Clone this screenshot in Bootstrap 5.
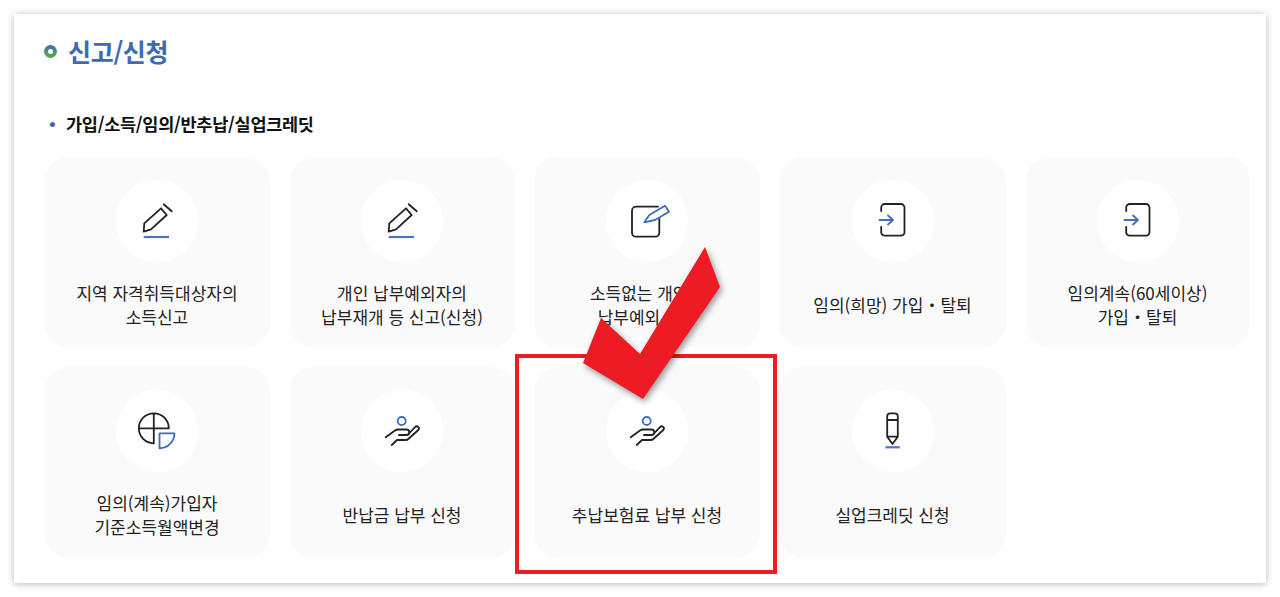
<!DOCTYPE html>
<html lang="ko">
  <head>
    <meta charset="UTF-8" />
    <meta name="viewport" content="width=device-width, initial-scale=1.0" />
    <title>신고/신청</title>
    <link href="https://cdn.jsdelivr.net/npm/bootstrap@5.3.0/dist/css/bootstrap.min.css" rel="stylesheet" />
    <style>
      html, body { height: 597px; overflow: hidden; background: #fff; }
      body { font-family: "Noto Sans CJK KR", "Noto Sans", sans-serif; color: #222; }
      .panel-box { margin: 14px; width: 1252px; height: 569px; padding: 0 16px 0 30px; box-shadow: 0 1px 7px rgba(0,0,0,.28); }
      .page-title { height: 76px; padding-bottom: 2px; gap: 11px; font-size: 25px; line-height: 36px; color: #3e69b3; font-weight: 700; letter-spacing: -.3px; margin: 0; }
      .title-ring { width: 13px; height: 13px; border-radius: 50%; background: linear-gradient(#3e69b3, #4fa653 70%); position: relative; flex: none; }
      .title-ring::after { content: ""; position: absolute; inset: 4px; border-radius: 50%; background: #fff; }
      .sub-title { height: 67px; padding: 1px 0 0 6px; gap: 11px; font-size: 17.5px; line-height: 24px; font-weight: 700; color: #111; letter-spacing: -.28px; margin: 0; }
      .sub-dot { width: 5px; height: 5px; border-radius: 50%; background: #4a5fb0; flex: none; }
      .tile-grid { grid-template-columns: 226px 226px 226px 227px 225px; grid-auto-rows: 191px; gap: 19px; }
      .tile { background: #fafafa; border-radius: 24px; padding-top: 23px; }
      .tile-circle { width: 82px; height: 82px; border-radius: 50%; background: #fff; flex: none; }
      .tile-circle svg { display: block; fill: none; stroke: #222; stroke-width: 1.8; stroke-linecap: round; stroke-linejoin: round; }
      .blue { stroke: #3f6cbf; }
      .blue-line { stroke: #4a75c9; stroke-width: 2.2; stroke-linecap: butt; }
      .tile-label { font-size: 17px; line-height: 23.5px; color: #222; padding-bottom: 1px; }
      .red-frame { position: absolute; left: 515px; top: 354px; width: 262px; height: 220px; border: 4px solid #ed1c24; }
      .red-check { position: absolute; left: 570px; top: 235px; filter: drop-shadow(2px 3px 3px rgba(0,0,0,.4)); }
    </style>
  </head>
  <body>
    <svg width="0" height="0" class="position-absolute">
      <defs>
        <g id="icon-pencil">
          <path d="M27.7 51.7 28.3 43.3 45 28.3 50.7 35 35 49.3Z" />
          <path d="M47.7 24.3 55.7 31.3" />
          <path class="blue-line" d="M27.7 57H53" />
        </g>
        <g id="icon-login">
          <path d="M29.2 31V27.5A3.5 3.5 0 0 1 32.7 24H49A3.5 3.5 0 0 1 52.5 27.5V52.2A3.5 3.5 0 0 1 49 55.7H32.7A3.5 3.5 0 0 1 29.2 52.2V47" />
          <path class="blue" d="M27.5 40H41M36 35.5 41 40 36 44.5" />
        </g>
        <g id="icon-hand">
          <circle class="blue" cx="40.7" cy="31" r="4" />
          <path d="M24.7 47.3 34 40.5C35 39.8 36 39.5 37 39.5H45.5A2.7 2.7 0 0 1 45.5 45H38" />
          <path d="M47.5 44 54 37.2C56 35 59.3 37.5 57.3 40L47.3 49C46.5 49.7 45.7 50 45 50H36L30.7 55" />
        </g>
      </defs>
    </svg>

    <div class="panel-box position-relative bg-white">
      <h2 class="page-title d-flex align-items-center">
        <span class="title-ring"></span>
        <span>신고/신청</span>
      </h2>
      <h3 class="sub-title d-flex align-items-center">
        <span class="sub-dot"></span>
        <span>가입/소득/임의/반추납/실업크레딧</span>
      </h3>

      <div class="tile-grid d-grid">
        <div class="tile d-flex flex-column align-items-center">
          <div class="tile-circle"><svg width="82" height="82" viewBox="0 0 82 82"><use href="#icon-pencil" /></svg></div>
          <div class="tile-label flex-grow-1 d-flex align-items-center text-center">지역 자격취득대상자의<br />소득신고</div>
        </div>
        <div class="tile d-flex flex-column align-items-center">
          <div class="tile-circle"><svg width="82" height="82" viewBox="0 0 82 82"><use href="#icon-pencil" /></svg></div>
          <div class="tile-label flex-grow-1 d-flex align-items-center text-center">개인 납부예외자의<br />납부재개 등 신고(신청)</div>
        </div>
        <div class="tile d-flex flex-column align-items-center">
          <div class="tile-circle">
            <svg width="82" height="82" viewBox="0 0 82 82">
              <path d="M52 26.7H30A4 4 0 0 0 26 30.7V52.7A4 4 0 0 0 30 56.7H49.3A4 4 0 0 0 53.3 52.7V38" />
              <path class="blue" d="M38.3 42.3 43.3 35 59 25.7 63 31.7 49 40Z" />
            </svg>
          </div>
          <div class="tile-label flex-grow-1 d-flex align-items-center text-center">소득없는 개인의<br />납부예외 신청</div>
        </div>
        <div class="tile d-flex flex-column align-items-center">
          <div class="tile-circle"><svg width="82" height="82" viewBox="0 0 82 82"><use href="#icon-login" /></svg></div>
          <div class="tile-label flex-grow-1 d-flex align-items-center text-center">임의(희망) 가입・탈퇴</div>
        </div>
        <div class="tile d-flex flex-column align-items-center">
          <div class="tile-circle"><svg width="82" height="82" viewBox="0 0 82 82"><use href="#icon-login" /></svg></div>
          <div class="tile-label flex-grow-1 d-flex align-items-center text-center">임의계속(60세이상)<br />가입・탈퇴</div>
        </div>
        <div class="tile d-flex flex-column align-items-center">
          <div class="tile-circle">
            <svg width="82" height="82" viewBox="0 0 82 82">
              <path d="M52.8 38.3A15 15 0 1 0 37.8 53.3M22.8 38.3H52.8M37.8 23.3V53.3" />
              <path class="blue" d="M43.5 43.3H58.5A15 15 0 0 1 43.5 58.3Z" />
            </svg>
          </div>
          <div class="tile-label flex-grow-1 d-flex align-items-center text-center">임의(계속)가입자<br />기준소득월액변경</div>
        </div>
        <div class="tile d-flex flex-column align-items-center">
          <div class="tile-circle"><svg width="82" height="82" viewBox="0 0 82 82"><use href="#icon-hand" /></svg></div>
          <div class="tile-label flex-grow-1 d-flex align-items-center text-center">반납금 납부 신청</div>
        </div>
        <div class="tile d-flex flex-column align-items-center">
          <div class="tile-circle"><svg width="82" height="82" viewBox="0 0 82 82"><use href="#icon-hand" /></svg></div>
          <div class="tile-label flex-grow-1 d-flex align-items-center text-center">추납보험료 납부 신청</div>
        </div>
        <div class="tile d-flex flex-column align-items-center">
          <div class="tile-circle">
            <svg width="82" height="82" viewBox="0 0 82 82">
              <path d="M35.2 46.7V26.3A3 3 0 0 1 38.2 23.3H42.8A3 3 0 0 1 45.8 26.3V46.7L40.5 54ZM35.2 30H45.8M35.2 46.7H45.8" />
              <path class="blue-line" d="M33.5 57.3H47.8" />
            </svg>
          </div>
          <div class="tile-label flex-grow-1 d-flex align-items-center text-center">실업크레딧 신청</div>
        </div>
      </div>
    </div>

    <!-- 위에 덧그린 표시 -->
    <div class="red-frame"></div>
    <svg class="red-check" width="160" height="175" viewBox="570 235 160 175">
      <path fill="#ed1c24" d="M705 247 720 287 643 399 583 363 601 318 640 354Z" />
    </svg>

    <script src="https://cdn.jsdelivr.net/npm/bootstrap@5.3.0/dist/js/bootstrap.bundle.min.js"></script>
  </body>
</html>
